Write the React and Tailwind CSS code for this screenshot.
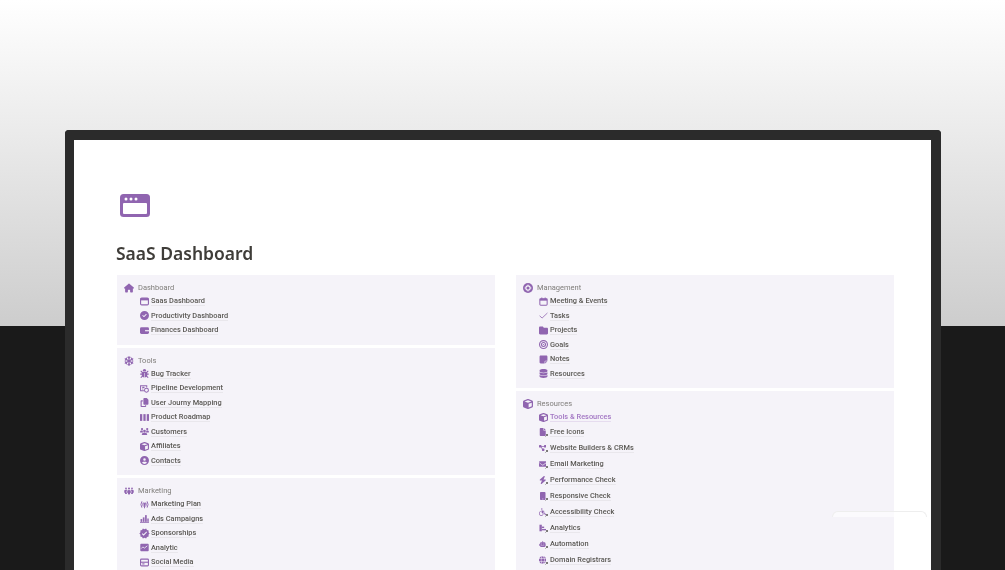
import {
  FaHouse, FaCircleCheck, FaBug, FaUsers, FaCircleUser, FaPeopleGroup, FaNoteSticky, FaDatabase, FaCube,
  FaFolder, FaBullseye, FaFile, FaDiagramProject, FaEnvelope, FaBolt, FaMobile, FaWheelchair,
  FaRobot, FaGlobe, FaCopy, FaSnowflake,
} from 'react-icons/fa6';
import { MdVerified } from 'react-icons/md';

const BrowserIcon = ({ className }) => (
  <svg viewBox="0 0 30 23" className={className} fill="none">
    <rect width="30" height="23" rx="3.5" fill="currentColor" />
    <rect x="3" y="9" width="24" height="11" rx="1" fill="#fff" />
    <circle cx="6" cy="5" r="1.5" fill="#fff" />
    <circle cx="11" cy="5" r="1.5" fill="#fff" />
    <circle cx="16" cy="5" r="1.5" fill="#fff" />
  </svg>
);

const WindowIcon = ({ className }) => (
  <svg viewBox="0 0 16 16" className={className} fill="none">
    <rect x="1" y="2" width="14" height="12" rx="2" fill="none" stroke="currentColor" strokeWidth="2" />
    <rect x="1" y="2" width="14" height="4" fill="currentColor" />
  </svg>
);

const CardIcon = ({ className }) => (
  <svg viewBox="0 0 16 16" className={className}>
    <rect y="2" width="16" height="12" rx="2.5" fill="currentColor" />
    <rect x="9" y="7" width="7" height="2.5" fill="#e9e0f0" />
  </svg>
);

const PipelineIcon = ({ className }) => (
  <svg viewBox="0 0 16 16" className={className} fill="none" stroke="currentColor" strokeWidth="1.8">
    <path d="M7 12H1V3h11v3" />
    <circle cx="11.5" cy="11" r="3.5" />
    <path d="M4 6h4M4 9h2" />
  </svg>
);

const ColumnsIcon = ({ className }) => (
  <svg viewBox="0 0 16 16" className={className} fill="currentColor">
    <rect x="0" y="2" width="4" height="12" />
    <rect x="6" y="2" width="4" height="12" />
    <rect x="12" y="2" width="4" height="12" />
  </svg>
);

const BroadcastIcon = ({ className }) => (
  <svg viewBox="0 0 16 16" className={className} fill="none" stroke="currentColor" strokeWidth="1.7" strokeLinecap="round">
    <path d="M3 3Q0 8 3 13M13 3q3 5 0 10M5.5 5q-1.5 3 0 6M10.5 5q1.5 3 0 6" />
    <path d="M8 8v6" />
    <circle cx="8" cy="7" r="1.3" fill="currentColor" />
  </svg>
);

const BarsIcon = ({ className }) => (
  <svg viewBox="0 0 16 16" className={className} fill="currentColor">
    <rect x="1" y="9" width="3" height="5" />
    <rect x="5" y="6" width="3" height="8" />
    <rect x="9" y="2" width="3" height="12" />
    <rect x="13" y="8" width="2.5" height="6" />
    <rect y="14.2" width="16" height="1.4" />
  </svg>
);

const ChartBoxIcon = ({ className }) => (
  <svg viewBox="0 0 16 16" className={className}>
    <rect x="0.5" y="1.5" width="15" height="13" rx="1.5" fill="currentColor" />
    <path d="M2 10l3-3 3 2 5-4" fill="none" stroke="#f4f2f8" strokeWidth="1.4" />
  </svg>
);

const SocialIcon = ({ className }) => (
  <svg viewBox="0 0 16 16" className={className} fill="none">
    <rect x="1" y="2" width="14" height="12" rx="1.5" stroke="currentColor" strokeWidth="2" />
    <path d="M1 7.5h14" stroke="currentColor" strokeWidth="2" />
    <rect x="4" y="9.5" width="4" height="2" fill="currentColor" />
  </svg>
);

const GearDiscIcon = ({ className }) => (
  <svg viewBox="0 0 16 16" className={className} fill="none">
    <circle cx="8" cy="8" r="8" fill="currentColor" />
    <circle cx="8" cy="8" r="3.4" stroke="#f4f2f8" strokeWidth="1.8" />
    <path d="M8 2.5v2M8 11.5v2M2.5 8h2M11.5 8h2" stroke="#f4f2f8" strokeWidth="1.4" />
  </svg>
);

const CalendarIcon = ({ className }) => (
  <svg viewBox="0 0 16 16" className={className} fill="none">
    <rect x="1.5" y="3" width="13" height="11.5" rx="1.5" stroke="currentColor" strokeWidth="1.8" />
    <rect x="1.5" y="3" width="13" height="3.5" fill="currentColor" />
    <path d="M5 .8v3M11 .8v3" stroke="currentColor" strokeWidth="1.8" />
  </svg>
);

const CheckIcon = ({ className }) => (
  <svg viewBox="0 0 16 16" className={className} fill="none" stroke="currentColor" strokeWidth="1.4">
    <path d="M1 8.5l4.5 4L15 3.5" />
  </svg>
);

const AnalyticsIcon = ({ className }) => (
  <svg viewBox="0 0 16 16" className={className} fill="currentColor">
    <rect x="1" y="1" width="5" height="14" />
    <rect x="6" y="5" width="5" height="3" />
    <rect x="6" y="10" width="9" height="3" />
  </svg>
);

const Verified = ({ className }) => <MdVerified className={`${className} scale-125`} />;

const leftSections = [
  {
    title: 'Dashboard', icon: FaHouse,
    rows: [['Saas Dashboard', WindowIcon], ['Productivity Dashboard', FaCircleCheck], ['Finances Dashboard', CardIcon]],
  },
  {
    title: 'Tools', icon: FaSnowflake,
    rows: [
      ['Bug Tracker', FaBug], ['Pipeline Development', PipelineIcon], ['User Journy Mapping', FaCopy],
      ['Product Roadmap', ColumnsIcon], ['Customers', FaUsers], ['Affiliates', FaCube], ['Contacts', FaCircleUser],
    ],
  },
  {
    title: 'Marketing', icon: FaPeopleGroup,
    rows: [
      ['Marketing Plan', BroadcastIcon], ['Ads Campaigns', BarsIcon], ['Sponsorships', Verified],
      ['Analytic', ChartBoxIcon], ['Social Media', SocialIcon],
    ],
  },
];

const rightSections = [
  {
    title: 'Management', icon: GearDiscIcon,
    rows: [
      ['Meeting & Events', CalendarIcon], ['Tasks', CheckIcon], ['Projects', FaFolder],
      ['Goals', FaBullseye], ['Notes', FaNoteSticky], ['Resources', FaDatabase],
    ],
  },
  {
    title: 'Resources', icon: FaCube, tall: true,
    rows: [
      ['Tools & Resources', FaCube, 'accent'], ['Free Icons', FaFile, 'link'], ['Website Builders & CRMs', FaDiagramProject, 'link'],
      ['Email Marketing', FaEnvelope, 'link'], ['Performance Check', FaBolt, 'link'], ['Responsive Check', FaMobile, 'link'],
      ['Accessibility Check', FaWheelchair, 'link'], ['Analytics', AnalyticsIcon, 'link'], ['Automation', FaRobot, 'link'],
      ['Domain Registrars', FaGlobe, 'link'],
    ],
  },
];

function Row({ label, icon: Icon, kind, tall }) {
  return (
    <div className={`flex items-center ${tall && kind !== 'accent' ? 'h-[15.9px]' : 'h-[14.5px]'}`}>
      <span className="relative flex w-[9px] h-[9px] items-center text-[#9065b0]">
        <Icon className={kind === 'link' ? 'w-[7.5px] h-[8px]' : 'w-[9px] h-[9px]'} />
        {kind === 'link' && (
          <svg viewBox="0 0 6 6" className="absolute -right-[0.5px] -bottom-[0.5px] w-[3px] h-[3px] text-[#4b4945]" fill="none" stroke="currentColor" strokeWidth="1.4">
            <path d="M1 5l4-4M2 1h3v3" />
          </svg>
        )}
      </span>
      <span
        className={`ml-[2.5px] text-[7.4px] leading-[9px] font-medium border-b ${
          kind === 'accent' ? 'text-[#a377c4] border-[#e6dcef]' : 'text-[#5a5854] border-[#e9e7ec]'
        }`}
      >
        {label}
      </span>
    </div>
  );
}

function Section({ section }) {
  const Icon = section.icon;
  return (
    <div className="bg-[#f5f3f9] pt-[7px] pb-[7px] pl-[7px]">
      <div className="flex items-center h-[12px]">
        <Icon className="w-[10px] h-[10px] text-[#9065b0]" />
        <span className="ml-[4px] text-[7.5px] text-[#7f7d7a]">{section.title}</span>
      </div>
      <div className="ml-[15.5px]">
        {section.rows.map(([label, icon, kind]) => (
          <Row key={label} label={label} icon={icon} kind={kind} tall={section.tall} />
        ))}
      </div>
    </div>
  );
}

export default function App() {
  return (
    <div
      className="h-[570px] overflow-hidden bg-[linear-gradient(#ffffff_0,#cdcdcd_326px,#1a1a1a_326px)] pt-[130px] pl-[65px]"
      style={{ fontFamily: 'Roboto, "Noto Sans", sans-serif' }}
    >
      <div className="relative w-[876px] h-[480px] bg-white border-t-[10px] border-l-[9px] border-r-[10px] border-[#2b2b2b] rounded-t-[4px] pt-[54px] pl-[42px] pr-[37px]">
        <div className="blur-[0.4px]">
          <BrowserIcon className="ml-[4px] w-[30px] h-[23px] text-[#9065b0]" />
          <h1 className="mt-[22px] text-[17.5px] leading-[28px] font-semibold text-[#3f3d39] font-['Noto_Sans']">SaaS Dashboard</h1>
          <div className="mt-[8px] ml-[1px] grid grid-cols-2 gap-x-[21px]">
            <div className="flex flex-col gap-[3px]">
              {leftSections.map((s) => (
                <Section key={s.title} section={s} />
              ))}
            </div>
            <div className="flex flex-col gap-[3px]">
              {rightSections.map((s) => (
                <Section key={s.title} section={s} />
              ))}
            </div>
          </div>
        </div>
        <div className="absolute left-[758px] top-[371px] w-[95px] h-[6px] rounded-t-lg border-t border-x border-[#eeeeee] bg-white/60" />
      </div>
    </div>
  );
}
